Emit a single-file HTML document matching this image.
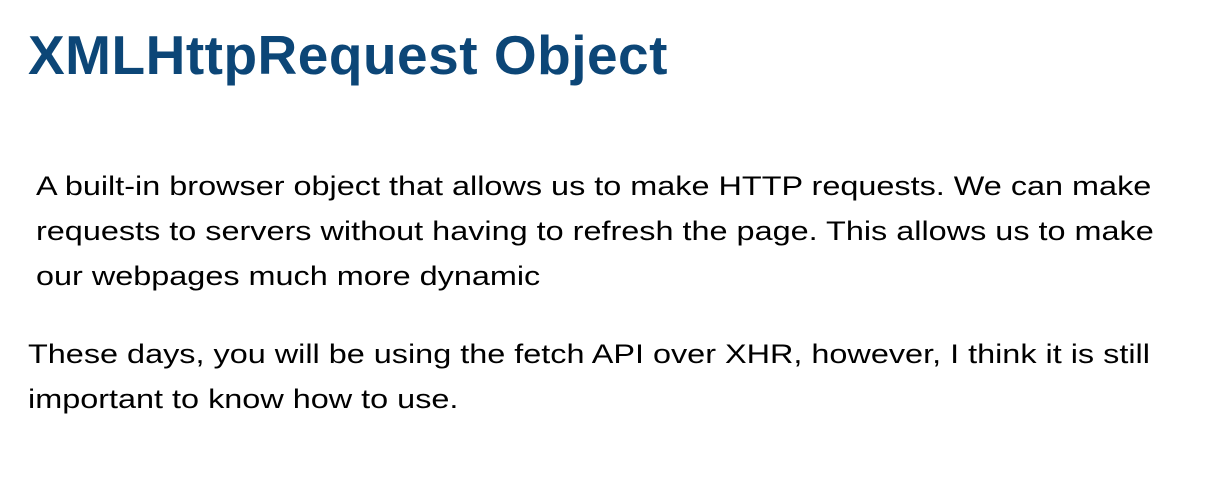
<!DOCTYPE html>
<html><head><meta charset="utf-8"><style>
html,body{margin:0;padding:0;background:#fff;width:1207px;height:494px;overflow:hidden;font-family:"Liberation Sans",Arial,sans-serif;}
h1{position:absolute;left:28px;top:22px;margin:0;font-size:55px;font-weight:bold;color:#0c4677;letter-spacing:0.5px;line-height:66px;white-space:nowrap;}
.p{position:absolute;margin:0;font-size:27px;color:#000;line-height:45px;white-space:nowrap;transform:scaleX(1.2);transform-origin:0 0;}
</style></head><body>
<h1>XMLHttpRequest Object</h1>
<div class="p" style="left:36px;top:164px;">A built-in browser object that allows us to make HTTP requests. We can make<br>requests to servers without having to refresh the page. This allows us to make<br>our webpages much more dynamic</div>
<div class="p" style="left:28px;top:332px;">These days, you will be using the fetch API over XHR, however, I think it is still<br>important to know how to use.</div>
</body></html>
